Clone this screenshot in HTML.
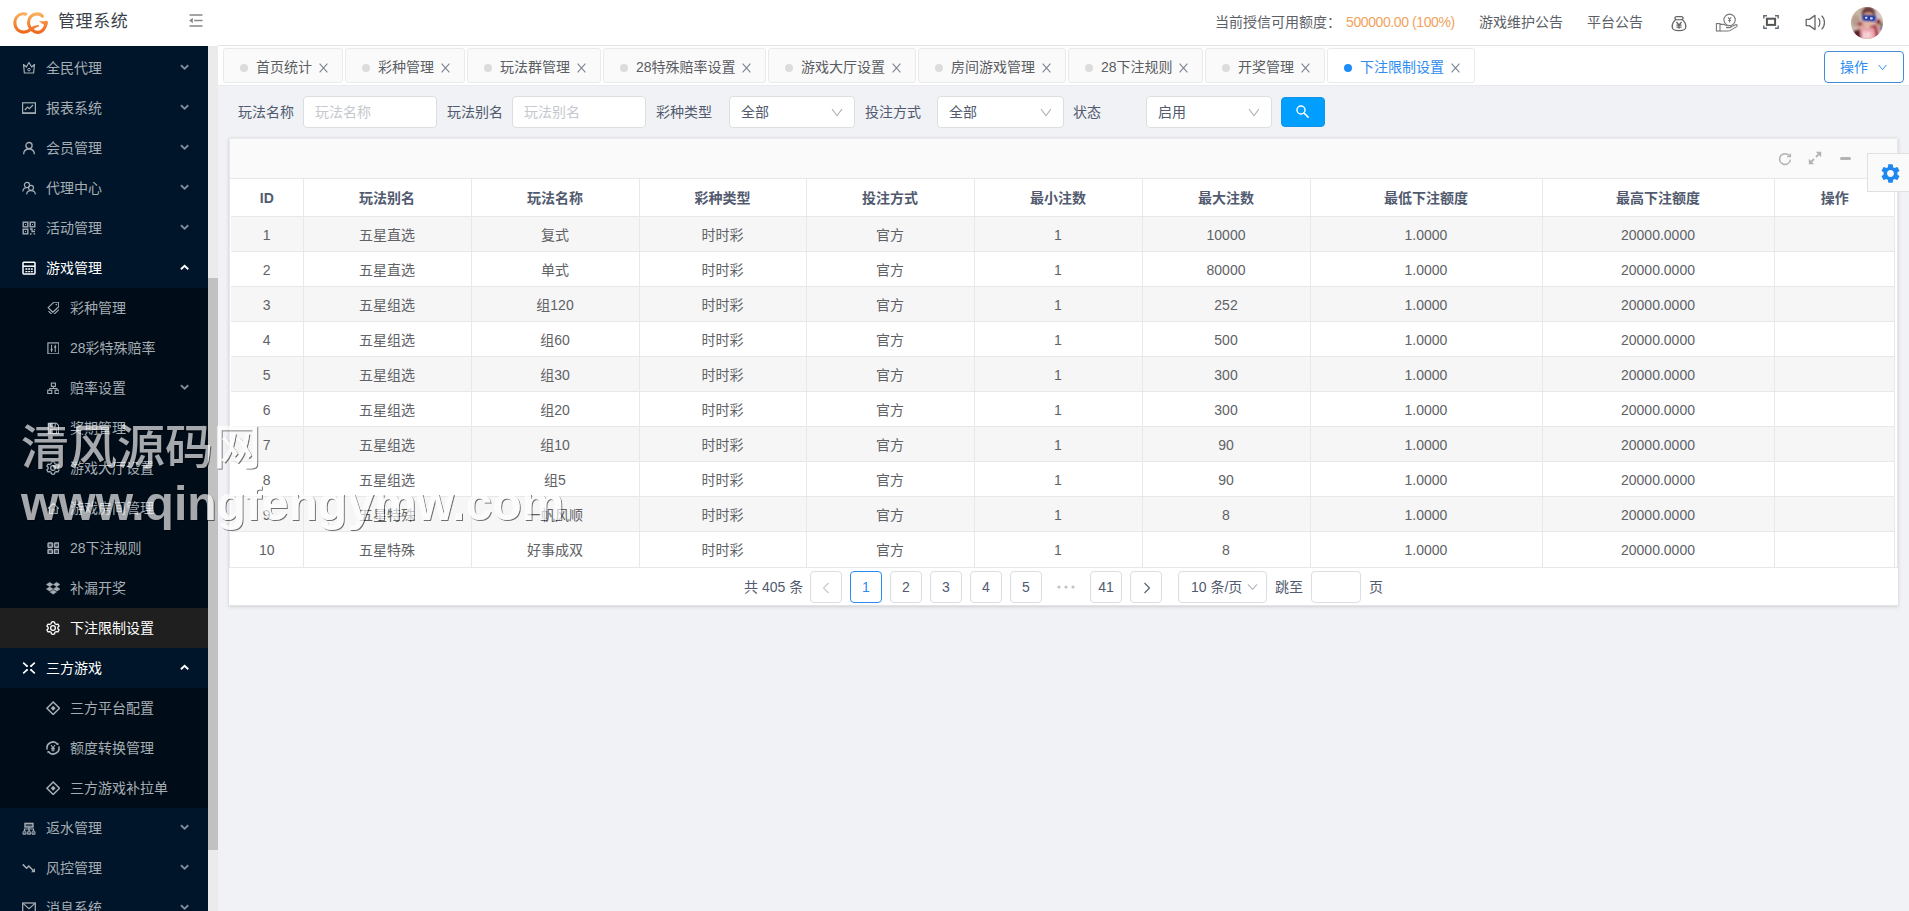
<!DOCTYPE html>
<html lang="zh-CN"><head><meta charset="utf-8"><title>管理系统</title>
<style>
*{box-sizing:border-box;margin:0;padding:0}
html,body{width:1909px;height:911px;overflow:hidden}
body{position:relative;background:#f0f2f5;font-family:"Liberation Sans","Noto Sans CJK SC",sans-serif;font-size:14px;color:#515a6e;line-height:1}
.abs{position:absolute}
#hdr{left:0;top:0;width:1909px;height:46px;background:#fff}
#hdrline{left:218px;top:45px;width:1691px;height:1px;background:#e4e4e4}
#logo{left:13.1px;top:11.5px;width:34.8px;height:21.9px;overflow:visible}
#title{left:58px;top:1px;height:42px;line-height:42px;font-size:17px;letter-spacing:0.6px;color:#3a3f4a;white-space:nowrap}
#fold{left:189px;top:14px;width:14px;height:13px}
.ht{top:0;height:44px;line-height:44px;white-space:nowrap;color:#5c6066}
#side{left:0;top:46px;width:208px;height:865px;background:#001529;overflow:hidden}
#sbtrack{left:208px;top:46px;width:10px;height:865px;background:#ebebeb}
#sbthumb{left:208px;top:278px;width:10px;height:572px;background:#c1c1c1}
.mi{position:absolute;left:0;width:208px;height:40px;line-height:40px;color:#a6adb4;white-space:nowrap}
.mi .tx{position:absolute;left:46px;top:0}
.mi.sub .tx{left:70px}
.mi svg.ic{position:absolute;left:22px;top:13px;width:14px;height:14px}
.mi.sub svg.ic{left:46.6px;top:13.6px;width:12.8px;height:12.8px}
.mi svg.ar{position:absolute;left:180.4px;top:16.3px;width:9.2px;height:6.5px}
.mi.open{color:#fff}
.mi.sel{background:#1f1f1f;color:#fff}
.subbg{position:absolute;left:0;width:208px;background:#000c17}
#tabs{left:218px;top:46px;width:1691px;height:39px;background:#fff}
#tabsline{left:218px;top:85px;width:1691px;height:1px;background:#e9eaec}
.tab{position:absolute;top:48px;height:35px;border:1px solid #e8eaec;border-radius:3px;background:#fafafa;color:#5a5d63;line-height:33px;white-space:nowrap}
.tab .dot{position:absolute;left:16.3px;top:15px;width:8px;height:8px;border-radius:50%;background:#dcdcdc}
.tab .tx{position:absolute;left:32px;top:1.5px}
.tab svg{position:absolute;right:14.5px;top:14px;width:9px;height:10px}
.tab.act{background:#fff;color:#2d8cf0}
.tab.act .dot{background:#1f8df8}
#opbtn{left:1824px;top:51px;width:80px;height:32px;border:1px solid #4189d9;border-radius:4px;color:#2d8cf0;background:#fff;line-height:30px}
.lbl{top:96px;height:32px;line-height:32px;color:#515a6e;white-space:nowrap}
.inp{top:96px;height:32px;border:1px solid #dcdee2;border-radius:4px;background:#fff;line-height:30px;padding-left:11px;white-space:nowrap}
.inp.ph{color:#c5c8ce}
.inp svg{position:absolute;right:11px;top:10.5px;width:12px;height:9px}
#sbtn{left:1281px;top:97px;width:44px;height:30px;border-radius:4px;background:#009eff;border:1px solid #1094ea}
#card{left:229px;top:138px;width:1669px;height:468px;background:#fff;box-shadow:0 1px 4px rgba(20,20,20,.13),0 0 2px rgba(20,20,20,.07)}
#cardhd{left:0;top:0;width:1669px;height:41px;background:#fafafa;border-bottom:1px solid #e8e8e8}
table{position:absolute;left:2px;top:41px;width:1664px;border-collapse:collapse;table-layout:fixed}
th,td{text-align:center;border-right:1px solid #e8e8e8;border-bottom:1px solid #e8e8e8;overflow:hidden;white-space:nowrap;padding:2px 0 0 0}
th:last-child,td:last-child{border-right:none}
th{height:37px;font-weight:bold;color:#515a6e;background:#fff}
td{height:35px;color:#606266}
tr.odd td{background:#f6f6f6}
tr.last td{height:36px}
.pg{position:absolute;top:433px;height:32px;line-height:30px;text-align:center;white-space:nowrap}
.pb{width:32px;border:1px solid #dcdee2;border-radius:4px;background:#fff;color:#515a6e}
.pb.act{border-color:#2d8cf0;color:#2d8cf0}
#gearbox{left:1867px;top:153px;width:43px;height:39px;background:#fafafa;border:1px solid #e0e0e0}
.wm{position:absolute;left:21px;white-space:nowrap;font-weight:bold;color:#fff;filter:url(#wmf);z-index:50}
</style></head><body>

<div class="abs" id="hdr"></div>
<div class="abs" id="hdrline"></div>
<svg class="abs" id="logo" viewBox="130 190 880 555" preserveAspectRatio="none"><defs><linearGradient id="lg" gradientUnits="userSpaceOnUse" x1="0" y1="190" x2="0" y2="745"><stop offset="0" stop-color="#f8b566"/><stop offset="0.5" stop-color="#f48a3a"/><stop offset="1" stop-color="#f0641c"/></linearGradient></defs>
<path d="M478 262 C445 236 405 230 370 236 C250 256 176 350 176 465 C176 600 270 700 400 700 C480 700 540 660 585 625" fill="none" stroke="url(#lg)" stroke-width="80" stroke-linecap="butt"/><path d="M545 610 C610 560 690 525 785 520 L790 552 C720 575 660 610 610 668 Z" fill="url(#lg)"/>
<path d="M872 296 C838 250 790 234 742 236 C612 242 524 332 524 452 C524 524 552 598 620 650 C660 688 702 706 747 706 C870 706 958 600 966 450" fill="none" stroke="url(#lg)" stroke-width="80" stroke-linecap="round"/>
<path d="M782 426 L1008 426 L1004 520 L905 505 Z" fill="url(#lg)"/></svg>
<div class="abs" id="title">管理系统</div>
<svg class="abs" id="fold" viewBox="0 0 14 13"><path d="M0.5 1 H13.5 M5.2 6.5 H13.5 M0.5 12 H13.5" stroke="#868686" stroke-width="1.5"/><path d="M3.8 3.8 V9.2 L0.2 6.5 Z" fill="#868686"/></svg>
<div class="abs ht" style="left:1215px">当前授信可用额度：</div>
<div class="abs ht" style="left:1346px;color:#f2a25c;letter-spacing:-0.4px">500000.00 (100%)</div>
<div class="abs ht" style="left:1479px">游戏维护公告</div>
<div class="abs ht" style="left:1587px">平台公告</div>

<svg class="abs" style="left:1671px;top:14.5px;width:16px;height:17px" viewBox="0 0 16 17"><path d="M4.8 4.6 C3.4 3.4 3.8 1.6 5.4 1.6 H10.6 C12.2 1.6 12.6 3.4 11.2 4.6 C13.4 6.4 14.8 9.2 14.8 11.8 C14.8 14.8 13 15.6 8 15.6 C3 15.6 1.2 14.8 1.2 11.8 C1.2 9.2 2.6 6.4 4.8 4.6 Z" fill="none" stroke="#666" stroke-width="1.3"/><path d="M5 4.7 H11" stroke="#666" stroke-width="1.1"/><path d="M5.4 7 L8 10 L10.6 7 M8 10 V13.8 M5.4 10.2 H10.6 M5.4 12 H10.6" fill="none" stroke="#666" stroke-width="1.25"/></svg>
<svg class="abs" style="left:1715px;top:13px;width:24px;height:20px" viewBox="0 0 24 20"><circle cx="14.6" cy="6.8" r="5.7" fill="none" stroke="#777" stroke-width="1.1"/><path d="M13 4.2 L14.6 6.4 L16.2 4.2 M14.6 6.4 V9.6 M13.2 7.4 H16" fill="none" stroke="#777" stroke-width="1.05"/><rect x="1.4" y="10.6" width="3.6" height="7.4" fill="none" stroke="#777" stroke-width="1.1"/><path d="M5 11.4 H8.6 C10 11.4 10.6 12.8 12 12.8 H15 C16.4 12.8 16.4 14.6 15 14.6 H11 M16 13.8 L20.6 11.8 C22 11.2 22.8 12.8 21.6 13.6 L15 17.6 C14.4 18 13.8 18 13 18 H5" fill="none" stroke="#777" stroke-width="1.1" stroke-linejoin="round"/></svg>
<svg class="abs" style="left:1763px;top:15px;width:16px;height:14px" viewBox="0 0 16 14"><path d="M0.8 3.4 V0.8 H4 M12 0.8 H15.2 V3.4 M15.2 10.6 V13.2 H12 M4 13.2 H0.8 V10.6" fill="none" stroke="#5f6a7a" stroke-width="1.4"/><rect x="3.9" y="3.7" width="8.2" height="6.2" fill="none" stroke="#555" stroke-width="2"/></svg>
<svg class="abs" style="left:1805px;top:14px;width:22px;height:17px" viewBox="0 0 22 17"><path d="M1.2 5.4 H4.4 L10 1.4 V15.6 L4.4 11.6 H1.2 Z" fill="none" stroke="#666" stroke-width="1.3" stroke-linejoin="round"/><path d="M13.4 4.2 C15.4 6.4 15.4 10.6 13.4 12.8" fill="none" stroke="#666" stroke-width="1.25"/><path d="M16.6 1.6 C20.4 5.2 20.4 11.8 16.6 15.4" fill="none" stroke="#666" stroke-width="1.25"/></svg>

<svg class="abs" style="left:1851px;top:7px;width:32px;height:32px" viewBox="0 0 32 32"><defs><clipPath id="av"><circle cx="16" cy="16" r="16"/></clipPath><filter id="avb" x="-10%" y="-10%" width="120%" height="120%"><feGaussianBlur stdDeviation="0.9"/></filter></defs><g clip-path="url(#av)"><rect width="32" height="32" fill="#cdb9ae"/><g filter="url(#avb)">
<rect x="-2" y="-2" width="14" height="20" fill="#c8b6a4"/><rect x="22" y="-2" width="12" height="18" fill="#d9c6c2"/>
<ellipse cx="5" cy="14" rx="4" ry="6" fill="#b89c90"/>
<ellipse cx="17.5" cy="6" rx="7" ry="6.5" fill="#6e3c3e"/>
<ellipse cx="17.5" cy="8.4" rx="4.6" ry="3" fill="#d6a08c"/>
<ellipse cx="17" cy="17" rx="5.4" ry="5.2" fill="#e2b6a6"/>
<path d="M4 30 L8 17 L12 14 L14 18 L11 32 Z" fill="#d9a79a"/>
<path d="M22 18 L27 12 L30 14 L28 24 L24 30 Z" fill="#cf9a90"/>
<ellipse cx="9" cy="17" rx="2.4" ry="2" fill="#a83848"/>
<ellipse cx="27.5" cy="14.5" rx="2.4" ry="2.6" fill="#8c2430"/>
<path d="M19 19 L25 18 L28 30 L22 32 Z" fill="#a8304a"/>
<path d="M9 32 L11 21 L23 21 L25 32 Z" fill="#eaa2aa"/>
<rect x="12.6" y="24.5" width="2" height="7" fill="#fbe9ea"/><rect x="16" y="24.5" width="2" height="7" fill="#fbe9ea"/><rect x="19" y="25" width="1.6" height="6" fill="#f6d4d8"/>
<path d="M3 24 L9 22 L10 32 L2 32 Z" fill="#5c1c2c"/>
<ellipse cx="30.5" cy="17.5" rx="1.6" ry="2" fill="#4a7a44"/><ellipse cx="30.5" cy="21.5" rx="1.6" ry="2" fill="#6a5aa8"/>
</g><g filter="url(#avb)"><path d="M11.4 8 L25 8.6 L24.6 14.6 L11.6 13.6 Z" fill="#2434a4"/></g><ellipse cx="15.2" cy="10.8" rx="1.3" ry="1" fill="#dfe8ff"/><ellipse cx="20.4" cy="11.4" rx="1.5" ry="1.1" fill="#cfe0f8"/></g></svg>

<div class="abs" id="side">
<div class="subbg" style="top:242px;height:360px"></div>
<div class="subbg" style="top:642px;height:120px"></div>
<div class="mi" style="top:2px"><svg class="ic" viewBox="0 0 14 14"><path d="M1.5 3.5 L4.3 6 L7 1.5 L9.7 6 L12.5 3.5 L11.6 12 H2.4 Z" fill="none" stroke="currentColor" stroke-width="1.2" stroke-linejoin="round"/><circle cx="7" cy="8.6" r="1.3" fill="none" stroke="currentColor" stroke-width="1"/></svg><span class="tx">全民代理</span><svg class="ar" viewBox="0 0 10 7"><path d="M1 1.4 L5 5.1 L9 1.4" fill="none" stroke="#7d8b9b" stroke-width="2.1"/></svg></div>
<div class="mi" style="top:42px"><svg class="ic" viewBox="0 0 14 14"><rect x="0.6" y="1.8" width="12.8" height="10.2" fill="none" stroke="currentColor" stroke-width="1.2"/><path d="M0 12.2 H14" stroke="currentColor" stroke-width="1.4"/><path d="M2.8 9 L5.6 6 L7.4 7.6 L11 4" fill="none" stroke="currentColor" stroke-width="1.2"/></svg><span class="tx">报表系统</span><svg class="ar" viewBox="0 0 10 7"><path d="M1 1.4 L5 5.1 L9 1.4" fill="none" stroke="#7d8b9b" stroke-width="2.1"/></svg></div>
<div class="mi" style="top:82px"><svg class="ic" viewBox="0 0 14 14"><circle cx="7" cy="4.6" r="3.1" fill="none" stroke="currentColor" stroke-width="1.3"/><path d="M1.6 13.2 C1.8 9.8 4 8 7 8 C10 8 12.2 9.8 12.4 13.2" fill="none" stroke="currentColor" stroke-width="1.3"/></svg><span class="tx">会员管理</span><svg class="ar" viewBox="0 0 10 7"><path d="M1 1.4 L5 5.1 L9 1.4" fill="none" stroke="#7d8b9b" stroke-width="2.1"/></svg></div>
<div class="mi" style="top:122px"><svg class="ic" viewBox="0 0 14 14"><circle cx="5" cy="4" r="2.6" fill="none" stroke="currentColor" stroke-width="1.2"/><path d="M0.8 10.5 C1 8 2.6 6.8 4.4 6.6" fill="none" stroke="currentColor" stroke-width="1.2"/><circle cx="9" cy="6.8" r="2.5" fill="none" stroke="currentColor" stroke-width="1.2"/><path d="M4.6 13.4 C4.8 10.8 6.6 9.6 9 9.6 C11.4 9.6 13.2 10.8 13.4 13.4" fill="none" stroke="currentColor" stroke-width="1.2"/></svg><span class="tx">代理中心</span><svg class="ar" viewBox="0 0 10 7"><path d="M1 1.4 L5 5.1 L9 1.4" fill="none" stroke="#7d8b9b" stroke-width="2.1"/></svg></div>
<div class="mi" style="top:162px"><svg class="ic" viewBox="0 0 14 14"><rect x="1.2" y="1.2" width="4.6" height="4.6" fill="none" stroke="currentColor" stroke-width="1.4"/><rect x="8.2" y="1.2" width="4.6" height="4.6" fill="none" stroke="currentColor" stroke-width="1.4"/><rect x="1.2" y="8.2" width="4.6" height="4.6" fill="none" stroke="currentColor" stroke-width="1.4"/><rect x="3" y="3" width="1" height="1" fill="currentColor"/><rect x="10" y="3" width="1" height="1" fill="currentColor"/><rect x="3" y="10" width="1" height="1" fill="currentColor"/><path d="M8 8 H10 V10.5 H13 M8 13 H9.5 M11.5 12.8 H13.2 M12.6 8 V9" fill="none" stroke="currentColor" stroke-width="1.3"/></svg><span class="tx">活动管理</span><svg class="ar" viewBox="0 0 10 7"><path d="M1 1.4 L5 5.1 L9 1.4" fill="none" stroke="#7d8b9b" stroke-width="2.1"/></svg></div>
<div class="mi open" style="top:202px"><svg class="ic" viewBox="0 0 14 14"><rect x="1" y="1.3" width="12" height="11.6" rx="0.8" fill="none" stroke="currentColor" stroke-width="1.5"/><path d="M1 5.2 H13" stroke="currentColor" stroke-width="1.5"/><path d="M3.4 8 H5.4 M6.2 8 H8 M8.8 8 H10.8 M3.4 10.6 H5.4 M6.2 10.6 H8 M8.8 10.6 H10.8" stroke="currentColor" stroke-width="1.3"/></svg><span class="tx">游戏管理</span><svg class="ar" viewBox="0 0 10 7"><path d="M1 5.6 L5 1.9 L9 5.6" fill="none" stroke="#ffffff" stroke-width="2.1"/></svg></div>
<div class="mi sub" style="top:242px"><svg class="ic" viewBox="0 0 14 14"><path d="M7.6 0.2 H12.8 V5.2 L6.4 11.2 L1.2 6.2 Z" fill="none" stroke="currentColor" stroke-width="1.3" stroke-linejoin="round"/><circle cx="10.2" cy="2.8" r="0.9" fill="currentColor"/><path d="M13 8.4 L6.4 14.6 L1.6 10" fill="none" stroke="currentColor" stroke-width="1.2"/></svg><span class="tx">彩种管理</span></div>
<div class="mi sub" style="top:282px"><svg class="ic" viewBox="0 0 14 14"><rect x="1" y="1" width="12" height="12" fill="none" stroke="currentColor" stroke-width="1.3"/><path d="M5 3 V11 M9 3 V11" stroke="currentColor" stroke-width="1.1"/><circle cx="5" cy="8.4" r="1.2" fill="currentColor"/><circle cx="9" cy="5.6" r="1.2" fill="currentColor"/></svg><span class="tx">28彩特殊赔率</span></div>
<div class="mi sub" style="top:322px"><svg class="ic" viewBox="0 0 14 14"><rect x="4.8" y="1.2" width="4.4" height="3.6" fill="none" stroke="currentColor" stroke-width="1.2"/><rect x="0.8" y="9" width="4.4" height="3.6" fill="none" stroke="currentColor" stroke-width="1.2"/><rect x="8.8" y="9" width="4.4" height="3.6" fill="none" stroke="currentColor" stroke-width="1.2"/><path d="M7 4.8 V7 M3 9 V7 H11 V9" fill="none" stroke="currentColor" stroke-width="1.1"/></svg><span class="tx">赔率设置</span><svg class="ar" viewBox="0 0 10 7"><path d="M1 1.4 L5 5.1 L9 1.4" fill="none" stroke="#7d8b9b" stroke-width="2.1"/></svg></div>
<div class="mi sub" style="top:362px"><svg class="ic" viewBox="0 0 14 14"><path d="M1.4 1.4 H10.4 L12.6 3.6 V12.6 H1.4 Z" fill="none" stroke="currentColor" stroke-width="1.2"/><rect x="4" y="1.4" width="5" height="3.4" fill="none" stroke="currentColor" stroke-width="1.1"/><rect x="3.6" y="8" width="6.8" height="4.6" fill="none" stroke="currentColor" stroke-width="1.1"/></svg><span class="tx">奖期管理</span></div>
<div class="mi sub" style="top:402px"><svg class="ic" style="left:46px;top:13px;width:14px;height:14px" viewBox="0 0 14 14"><g transform="translate(7,7) scale(1.13) translate(-7,-6.5)"><path d="M7 0.9 L8.3 1.2 L8.7 2.7 L9.9 3.4 L11.4 3 L12.4 4.7 L11.3 5.8 V7.2 L12.4 8.3 L11.4 10 L9.9 9.6 L8.7 10.3 L8.3 11.8 L7 12.1 L5.7 11.8 L5.3 10.3 L4.1 9.6 L2.6 10 L1.6 8.3 L2.7 7.2 V5.8 L1.6 4.7 L2.6 3 L4.1 3.4 L5.3 2.7 L5.7 1.2 Z" fill="none" stroke="currentColor" stroke-width="1.15" stroke-linejoin="round"/><circle cx="7" cy="6.5" r="2.1" fill="none" stroke="currentColor" stroke-width="1.15"/></g></svg><span class="tx">游戏大厅设置</span></div>
<div class="mi sub" style="top:442px"><svg class="ic" viewBox="0 0 14 14"><path d="M0.8 7.4 L7 1.4 L13.2 7.4 M2.8 6 V12.6 H11.2 V6" fill="none" stroke="currentColor" stroke-width="1.2" stroke-linejoin="round"/><path d="M5.6 12.6 V8.6 H8.4 V12.6" fill="none" stroke="currentColor" stroke-width="1.1"/></svg><span class="tx">游戏房间管理</span></div>
<div class="mi sub" style="top:482px"><svg class="ic" viewBox="0 0 14 14"><g fill="currentColor" fill-opacity="0.35" stroke="currentColor" stroke-width="1.6"><rect x="1.2" y="1.2" width="4.6" height="4.6" rx="0.6"/><rect x="8.2" y="1.2" width="4.6" height="4.6" rx="0.6"/><rect x="1.2" y="8.2" width="4.6" height="4.6" rx="0.6"/><rect x="8.2" y="8.2" width="4.6" height="4.6" rx="0.6"/></g></svg><span class="tx">28下注规则</span></div>
<div class="mi sub" style="top:522px"><svg class="ic" style="left:46px;top:13px;width:14.4px;height:14.4px" viewBox="0 0 14 14"><path d="M3.6 1.2 L7 3.4 L3.6 5.6 L0.2 3.4 Z M10.4 1.2 L13.8 3.4 L10.4 5.6 L7 3.4 Z M3.6 5.6 L7 7.8 L3.6 10 L0.2 7.8 Z M10.4 5.6 L13.8 7.8 L10.4 10 L7 7.8 Z M3.7 10.8 L7 8.7 L10.3 10.8 L7 13 Z" fill="currentColor" stroke="currentColor" stroke-width="0.3"/></svg><span class="tx">补漏开奖</span></div>
<div class="mi sub sel" style="top:562px"><svg class="ic" style="left:46px;top:13px;width:14px;height:14px" viewBox="0 0 14 14"><g transform="translate(7,7) scale(1.13) translate(-7,-6.5)"><path d="M7 0.9 L8.3 1.2 L8.7 2.7 L9.9 3.4 L11.4 3 L12.4 4.7 L11.3 5.8 V7.2 L12.4 8.3 L11.4 10 L9.9 9.6 L8.7 10.3 L8.3 11.8 L7 12.1 L5.7 11.8 L5.3 10.3 L4.1 9.6 L2.6 10 L1.6 8.3 L2.7 7.2 V5.8 L1.6 4.7 L2.6 3 L4.1 3.4 L5.3 2.7 L5.7 1.2 Z" fill="none" stroke="currentColor" stroke-width="1.15" stroke-linejoin="round"/><circle cx="7" cy="6.5" r="2.1" fill="none" stroke="currentColor" stroke-width="1.15"/></g></svg><span class="tx">下注限制设置</span></div>
<div class="mi open" style="top:602px"><svg class="ic" viewBox="0 0 14 14"><path d="M1.2 1.6 L5 5.2 M12.8 1.6 L9 5.2 M1.2 12.4 L5 8.8 M12.8 12.4 L9 8.8" fill="none" stroke="currentColor" stroke-width="1.6"/><path d="M5.8 3.8 V6 H3.6 Z M8.2 3.8 V6 H10.4 Z M5.8 10.2 V8 H3.6 Z M8.2 10.2 V8 H10.4 Z" fill="currentColor"/></svg><span class="tx">三方游戏</span><svg class="ar" viewBox="0 0 10 7"><path d="M1 5.6 L5 1.9 L9 5.6" fill="none" stroke="#ffffff" stroke-width="2.1"/></svg></div>
<div class="mi sub" style="top:642px"><svg class="ic" style="left:45.8px;top:12.8px;width:14.4px;height:14.4px" viewBox="0 0 14 14"><path d="M7 0.9 L13.1 7 L7 13.1 L0.9 7 Z" fill="none" stroke="currentColor" stroke-width="1.5" stroke-linejoin="round"/><path d="M7 4.6 L9.4 7 L7 9.4 L4.6 7 Z" fill="currentColor"/></svg><span class="tx">三方平台配置</span></div>
<div class="mi sub" style="top:682px"><svg class="ic" style="left:46px;top:13px;width:14px;height:14px" viewBox="0 0 14 14"><path d="M1.2 8.6 A6 6 0 0 1 11.6 3.2 M12.8 5.4 A6 6 0 0 1 2.4 10.8" fill="none" stroke="currentColor" stroke-width="1.5"/><path d="M10.2 3.9 L12.6 3.9 L12.4 1.4 Z M3.8 10.1 L1.4 10.1 L1.6 12.6 Z" fill="currentColor"/><path d="M5 4 L7 6.8 L9 4 M7 6.8 V10.4 M5.2 7.4 H8.8 M5.2 9 H8.8" fill="none" stroke="currentColor" stroke-width="1.1"/></svg><span class="tx">额度转换管理</span></div>
<div class="mi sub" style="top:722px"><svg class="ic" style="left:45.8px;top:12.8px;width:14.4px;height:14.4px" viewBox="0 0 14 14"><path d="M7 0.9 L13.1 7 L7 13.1 L0.9 7 Z" fill="none" stroke="currentColor" stroke-width="1.5" stroke-linejoin="round"/><path d="M7 4.6 L9.4 7 L7 9.4 L4.6 7 Z" fill="currentColor"/></svg><span class="tx">三方游戏补拉单</span></div>
<div class="mi" style="top:762px"><svg class="ic" viewBox="0 0 14 14"><rect x="3" y="2.4" width="8" height="3.6" fill="currentColor" fill-opacity="0.35" stroke="currentColor" stroke-width="1.4"/><path d="M1 13.2 V11.4 A1.5 1.5 0 0 1 4 11.4 V13.2 Z M5.5 13.2 V11.4 A1.5 1.5 0 0 1 8.5 11.4 V13.2 Z M10 13.2 V11.4 A1.5 1.5 0 0 1 13 11.4 V13.2 Z" fill="currentColor" fill-opacity="0.45" stroke="currentColor" stroke-width="1"/><path d="M7 6 V10 M2.5 10 V8 H11.5 V10" fill="none" stroke="currentColor" stroke-width="1.2"/></svg><span class="tx">返水管理</span><svg class="ar" viewBox="0 0 10 7"><path d="M1 1.4 L5 5.1 L9 1.4" fill="none" stroke="#7d8b9b" stroke-width="2.1"/></svg></div>
<div class="mi" style="top:802px"><svg class="ic" viewBox="0 0 14 14"><path d="M0.8 3.4 L4.6 7.2 L6.8 5 L12 10.2" fill="none" stroke="currentColor" stroke-width="1.5"/><path d="M13 7.2 V11.2 H9 Z" fill="currentColor"/></svg><span class="tx">风控管理</span><svg class="ar" viewBox="0 0 10 7"><path d="M1 1.4 L5 5.1 L9 1.4" fill="none" stroke="#7d8b9b" stroke-width="2.1"/></svg></div>
<div class="mi" style="top:842px"><svg class="ic" viewBox="0 0 14 14"><rect x="0.7" y="2" width="12.6" height="10" fill="none" stroke="currentColor" stroke-width="1.3"/><path d="M1 2.4 L7 7.6 L13 2.4" fill="none" stroke="currentColor" stroke-width="1.2"/></svg><span class="tx">消息系统</span><svg class="ar" viewBox="0 0 10 7"><path d="M1 1.4 L5 5.1 L9 1.4" fill="none" stroke="#7d8b9b" stroke-width="2.1"/></svg></div>
</div>
<div class="abs" id="sbtrack"></div><div class="abs" id="sbthumb"></div>
<div class="abs" id="tabs"></div><div class="abs" id="tabsline"></div>
<div class="tab" style="left:223px;width:120px"><i class="dot"></i><span class="tx">首页统计</span><svg viewBox="0 0 9 10" preserveAspectRatio="none"><path d="M0.6 0.6 L8.4 9.4 M8.4 0.6 L0.6 9.4" stroke="#7d8390" stroke-width="1.1" fill="none"/></svg></div>
<div class="tab" style="left:345px;width:120px"><i class="dot"></i><span class="tx">彩种管理</span><svg viewBox="0 0 9 10" preserveAspectRatio="none"><path d="M0.6 0.6 L8.4 9.4 M8.4 0.6 L0.6 9.4" stroke="#7d8390" stroke-width="1.1" fill="none"/></svg></div>
<div class="tab" style="left:467px;width:134px"><i class="dot"></i><span class="tx">玩法群管理</span><svg viewBox="0 0 9 10" preserveAspectRatio="none"><path d="M0.6 0.6 L8.4 9.4 M8.4 0.6 L0.6 9.4" stroke="#7d8390" stroke-width="1.1" fill="none"/></svg></div>
<div class="tab" style="left:603px;width:163px"><i class="dot"></i><span class="tx">28特殊赔率设置</span><svg viewBox="0 0 9 10" preserveAspectRatio="none"><path d="M0.6 0.6 L8.4 9.4 M8.4 0.6 L0.6 9.4" stroke="#7d8390" stroke-width="1.1" fill="none"/></svg></div>
<div class="tab" style="left:768px;width:148px"><i class="dot"></i><span class="tx">游戏大厅设置</span><svg viewBox="0 0 9 10" preserveAspectRatio="none"><path d="M0.6 0.6 L8.4 9.4 M8.4 0.6 L0.6 9.4" stroke="#7d8390" stroke-width="1.1" fill="none"/></svg></div>
<div class="tab" style="left:918px;width:148px"><i class="dot"></i><span class="tx">房间游戏管理</span><svg viewBox="0 0 9 10" preserveAspectRatio="none"><path d="M0.6 0.6 L8.4 9.4 M8.4 0.6 L0.6 9.4" stroke="#7d8390" stroke-width="1.1" fill="none"/></svg></div>
<div class="tab" style="left:1068px;width:135px"><i class="dot"></i><span class="tx">28下注规则</span><svg viewBox="0 0 9 10" preserveAspectRatio="none"><path d="M0.6 0.6 L8.4 9.4 M8.4 0.6 L0.6 9.4" stroke="#7d8390" stroke-width="1.1" fill="none"/></svg></div>
<div class="tab" style="left:1205px;width:120px"><i class="dot"></i><span class="tx">开奖管理</span><svg viewBox="0 0 9 10" preserveAspectRatio="none"><path d="M0.6 0.6 L8.4 9.4 M8.4 0.6 L0.6 9.4" stroke="#7d8390" stroke-width="1.1" fill="none"/></svg></div>
<div class="tab act" style="left:1327px;width:148px"><i class="dot"></i><span class="tx">下注限制设置</span><svg viewBox="0 0 9 10" preserveAspectRatio="none"><path d="M0.6 0.6 L8.4 9.4 M8.4 0.6 L0.6 9.4" stroke="#7d8390" stroke-width="1.1" fill="none"/></svg></div>
<div class="abs" id="opbtn"><span style="position:absolute;left:15px;top:0">操作</span><svg style="position:absolute;left:53px;top:12px;width:9px;height:7px" viewBox="0 0 9 7"><path d="M0.6 1 L4.5 5.6 L8.4 1" fill="none" stroke="#2d8cf0" stroke-width="0.95"/></svg></div>

<div class="abs lbl" style="left:238px">玩法名称</div>
<div class="abs inp ph" style="left:303px;width:134px">玩法名称</div>
<div class="abs lbl" style="left:447px">玩法别名</div>
<div class="abs inp ph" style="left:512px;width:134px">玩法别名</div>
<div class="abs lbl" style="left:656px">彩种类型</div>
<div class="abs inp" style="left:729px;width:126px">全部<svg viewBox="0 0 12 9"><path d="M1 1.2 L6 7.6 L11 1.2" fill="none" stroke="#b0b4bb" stroke-width="1.1"/></svg></div>
<div class="abs lbl" style="left:865px">投注方式</div>
<div class="abs inp" style="left:937px;width:127px">全部<svg viewBox="0 0 12 9"><path d="M1 1.2 L6 7.6 L11 1.2" fill="none" stroke="#b0b4bb" stroke-width="1.1"/></svg></div>
<div class="abs lbl" style="left:1073px">状态</div>
<div class="abs inp" style="left:1146px;width:126px">启用<svg viewBox="0 0 12 9"><path d="M1 1.2 L6 7.6 L11 1.2" fill="none" stroke="#b0b4bb" stroke-width="1.1"/></svg></div>
<div class="abs" id="sbtn"><svg style="position:absolute;left:13.2px;top:5.6px;width:15px;height:15px" viewBox="0 0 16 16"><circle cx="6.4" cy="6.4" r="4.3" fill="none" stroke="#fff" stroke-width="1.5"/><path d="M9.6 9.6 L14 14" stroke="#fff" stroke-width="1.7" stroke-linecap="round"/></svg></div>

<div class="abs" id="card">
<div class="abs" id="cardhd"></div>

<svg class="abs" style="left:1549px;top:14px;width:14px;height:14px" viewBox="0 0 14 14"><path d="M11.6 4.2 A5.4 5.4 0 1 0 12.4 7.6" fill="none" stroke="#b3b3b3" stroke-width="1.5"/><path d="M9.2 4.6 H12.4 V1.4" fill="none" stroke="#b3b3b3" stroke-width="1.4"/></svg>
<svg class="abs" style="left:1579px;top:13px;width:14px;height:14px" viewBox="0 0 14 14"><path d="M8 6 L11.6 2.4 M6 8 L2.4 11.6" fill="none" stroke="#b3b3b3" stroke-width="1.8"/><path d="M7.8 0.8 H13.2 V6.2 Z M0.8 7.8 V13.2 H6.2 Z" fill="#b3b3b3"/></svg>
<div class="abs" style="left:1611px;top:18.5px;width:11px;height:3px;border-radius:1.5px;background:#b3b3b3"></div>

<table><colgroup><col style="width:72px"><col style="width:168px"><col style="width:168px"><col style="width:167px"><col style="width:168px"><col style="width:168px"><col style="width:168px"><col style="width:232px"><col style="width:232px"><col style="width:121px"></colgroup>
<tr><th>ID</th><th>玩法别名</th><th>玩法名称</th><th>彩种类型</th><th>投注方式</th><th>最小注数</th><th>最大注数</th><th>最低下注额度</th><th>最高下注额度</th><th>操作</th></tr>
<tr class="odd"><td>1</td><td>五星直选</td><td>复式</td><td>时时彩</td><td>官方</td><td>1</td><td>10000</td><td>1.0000</td><td>20000.0000</td><td></td></tr>
<tr><td>2</td><td>五星直选</td><td>单式</td><td>时时彩</td><td>官方</td><td>1</td><td>80000</td><td>1.0000</td><td>20000.0000</td><td></td></tr>
<tr class="odd"><td>3</td><td>五星组选</td><td>组120</td><td>时时彩</td><td>官方</td><td>1</td><td>252</td><td>1.0000</td><td>20000.0000</td><td></td></tr>
<tr><td>4</td><td>五星组选</td><td>组60</td><td>时时彩</td><td>官方</td><td>1</td><td>500</td><td>1.0000</td><td>20000.0000</td><td></td></tr>
<tr class="odd"><td>5</td><td>五星组选</td><td>组30</td><td>时时彩</td><td>官方</td><td>1</td><td>300</td><td>1.0000</td><td>20000.0000</td><td></td></tr>
<tr><td>6</td><td>五星组选</td><td>组20</td><td>时时彩</td><td>官方</td><td>1</td><td>300</td><td>1.0000</td><td>20000.0000</td><td></td></tr>
<tr class="odd"><td>7</td><td>五星组选</td><td>组10</td><td>时时彩</td><td>官方</td><td>1</td><td>90</td><td>1.0000</td><td>20000.0000</td><td></td></tr>
<tr><td>8</td><td>五星组选</td><td>组5</td><td>时时彩</td><td>官方</td><td>1</td><td>90</td><td>1.0000</td><td>20000.0000</td><td></td></tr>
<tr class="odd"><td>9</td><td>五星特殊</td><td>一帆风顺</td><td>时时彩</td><td>官方</td><td>1</td><td>8</td><td>1.0000</td><td>20000.0000</td><td></td></tr>
<tr class="last"><td>10</td><td>五星特殊</td><td>好事成双</td><td>时时彩</td><td>官方</td><td>1</td><td>8</td><td>1.0000</td><td>20000.0000</td><td></td></tr>
</table>
<div class="pg" style="left:515px;line-height:32px">共 405 条</div>
<div class="pg pb" style="left:581px"><svg style="position:absolute;left:11px;top:10px;width:8px;height:12px" viewBox="0 0 8 12"><path d="M6.5 1 L1.5 6 L6.5 11" fill="none" stroke="#c5c8ce" stroke-width="1.1"/></svg></div>
<div class="pg pb act" style="left:621px">1</div>
<div class="pg pb" style="left:661px">2</div>
<div class="pg pb" style="left:701px">3</div>
<div class="pg pb" style="left:741px">4</div>
<div class="pg pb" style="left:781px">5</div>
<div class="pg" style="left:821px;width:32px"><svg style="position:absolute;left:7px;top:14px;width:18px;height:4px" viewBox="0 0 18 4"><circle cx="2" cy="2" r="1.6" fill="#c0c3c9"/><circle cx="9" cy="2" r="1.6" fill="#c0c3c9"/><circle cx="16" cy="2" r="1.6" fill="#c0c3c9"/></svg></div>
<div class="pg pb" style="left:861px">41</div>
<div class="pg pb" style="left:901px"><svg style="position:absolute;left:12px;top:10px;width:8px;height:12px" viewBox="0 0 8 12"><path d="M1.5 1 L6.5 6 L1.5 11" fill="none" stroke="#515a6e" stroke-width="1.1"/></svg></div>
<div class="pg pb" style="left:949px;width:89px;text-align:left;padding-left:12px">10 条/页<svg style="position:absolute;right:8px;top:11px;width:11px;height:8px" viewBox="0 0 12 8"><path d="M1 1.2 L6 6.6 L11 1.2" fill="none" stroke="#b0b4bb" stroke-width="1.1"/></svg></div>
<div class="pg" style="left:1046px;line-height:32px">跳至</div>
<div class="pg pb" style="left:1082px;width:50px"></div>
<div class="pg" style="left:1140px;line-height:32px">页</div>
<div class="abs" style="left:0;top:0;width:1px;height:430px;background:#e8e8e8"></div>
<div class="abs" style="left:1668px;top:0;width:1px;height:430px;background:#e8e8e8"></div>
<div class="abs" style="left:0;top:0;width:1669px;height:1px;background:#ececec"></div>
<div class="abs" style="left:0;top:467px;width:1669px;height:1px;background:#e4e4e4"></div>
<div class="abs" style="left:0;top:429px;width:1669px;height:1px;background:#e8e8e8"></div>
<div class="abs" style="left:1665px;top:41px;width:1px;height:389px;background:#e8e8e8"></div>
</div>
<div class="abs" id="gearbox"><svg class="abs" style="left:10.5px;top:8px;width:23px;height:23px" viewBox="0 0 24 24"><path fill="#1e87f0" d="M19.14 12.94c.04-.3.06-.61.06-.94 0-.32-.02-.64-.07-.94l2.03-1.58a.49.49 0 0 0 .12-.61l-1.92-3.32a.488.488 0 0 0-.59-.22l-2.39.96c-.5-.38-1.03-.7-1.62-.94l-.36-2.54a.484.484 0 0 0-.48-.41h-3.84c-.24 0-.43.17-.47.41l-.36 2.54c-.59.24-1.13.57-1.62.94l-2.39-.96c-.22-.08-.47 0-.59.22L2.74 8.87c-.12.21-.08.47.12.61l2.03 1.58c-.05.3-.09.63-.09.94s.02.64.07.94l-2.03 1.58a.49.49 0 0 0-.12.61l1.92 3.32c.12.22.37.29.59.22l2.39-.96c.5.38 1.03.7 1.62.94l.36 2.54c.05.24.24.41.48.41h3.84c.24 0 .44-.17.47-.41l.36-2.54c.59-.24 1.13-.56 1.62-.94l2.39.96c.22.08.47 0 .59-.22l1.92-3.32c.12-.22.07-.47-.12-.61l-2.01-1.58zM12 15.6c-1.98 0-3.6-1.62-3.6-3.6s1.62-3.6 3.6-3.6 3.6 1.62 3.6 3.6-1.62 3.6-3.6 3.6z"/></svg></div>
<svg width="0" height="0" style="position:absolute"><defs><filter id="wmf" x="-2%" y="-10%" width="104%" height="130%" color-interpolation-filters="sRGB">
<feOffset in="SourceAlpha" dx="1.4" dy="1.4" result="off"/><feGaussianBlur in="off" stdDeviation="0.55" result="bl"/>
<feComposite in="bl" in2="SourceAlpha" operator="out" result="so"/>
<feComponentTransfer in="so" result="sh"><feFuncA type="linear" slope="0.55"/></feComponentTransfer>
<feComponentTransfer in="SourceGraphic" result="tx"><feFuncA type="linear" slope="0.65"/></feComponentTransfer>
<feMerge><feMergeNode in="sh"/><feMergeNode in="tx"/></feMerge></filter></defs></svg>
<div class="wm" style="top:414px;font-size:48px;line-height:68px;font-weight:500;letter-spacing:0">清风源码网</div>
<div class="wm" style="top:473.5px;font-size:48px;line-height:60px;letter-spacing:0">www.qingfengymw.com</div>
</body></html>
